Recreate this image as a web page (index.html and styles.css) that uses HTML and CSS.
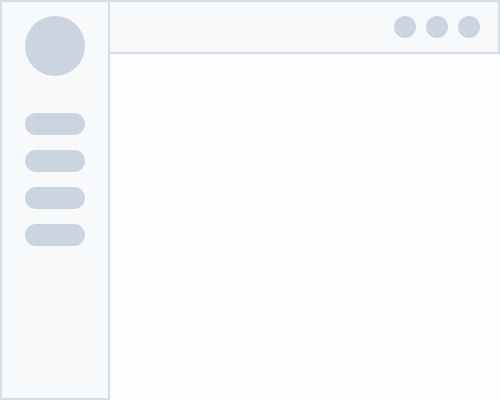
FILE: index.html
```html
<!DOCTYPE html>
<html>
<head>
<meta charset="utf-8">
<link rel="stylesheet" href="styles.css">
</head>
<body>
<div class="app">
  <aside class="sidebar">
    <div class="avatar"></div>
    <nav class="nav">
      <div class="pill"></div>
      <div class="pill"></div>
      <div class="pill"></div>
      <div class="pill"></div>
    </nav>
  </aside>
  <div class="main">
    <header class="topbar">
      <div class="dot"></div>
      <div class="dot"></div>
      <div class="dot"></div>
    </header>
    <section class="content"></section>
  </div>
</div>
</body>
</html>
```
FILE: styles.css
```css
html, body {
  margin: 0;
  padding: 0;
  background: #fcfdff;
  font-family: "Liberation Sans", sans-serif;
}
.app {
  display: flex;
  width: 500px;
  height: 400px;
}
.sidebar {
  box-sizing: border-box;
  width: 110px;
  height: 400px;
  background: #f8f9fa;
  border: 2px solid #d6dde6;
  display: flex;
  flex-direction: column;
  align-items: center;
  padding-top: 14px;
}
.avatar {
  width: 60px;
  height: 60px;
  border-radius: 50%;
  background: #cbd5e1;
}
.nav {
  margin-top: 37px;
  display: flex;
  flex-direction: column;
  gap: 15px;
}
.pill {
  width: 60px;
  height: 22px;
  border-radius: 11px;
  background: #cbd5e1;
}
.main {
  flex: 1;
  display: flex;
  flex-direction: column;
}
.topbar {
  box-sizing: border-box;
  height: 54px;
  background: #f8f9fa;
  border-top: 2px solid #d6dde6;
  border-right: 2px solid #d6dde6;
  border-bottom: 2px solid #d6dde6;
  display: flex;
  justify-content: flex-end;
  align-items: center;
  gap: 10px;
  padding-right: 18px;
}
.dot {
  width: 22px;
  height: 22px;
  border-radius: 50%;
  background: #cbd5e1;
}
.content {
  flex: 1;
  background: #fcfdff;
}
```
